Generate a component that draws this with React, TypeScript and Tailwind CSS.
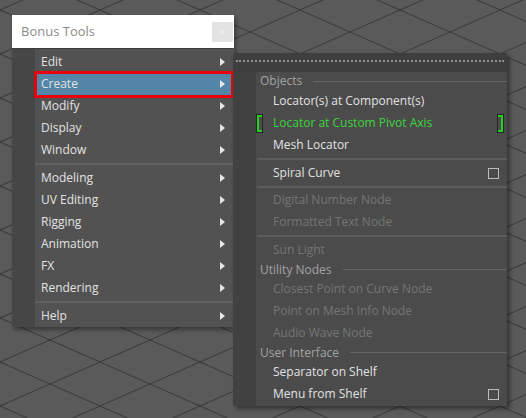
import React from "react";

const FONT = "font-['Open_Sans','Noto_Sans',sans-serif]";

function Grid() {
  const lines: React.ReactNode[] = [];
  const slope = 0.44;
  const step = 44;
  for (let i = -20; i < 30; i++) {
    const c = i * step + 10;
    lines.push(
      <line key={"a" + i} x1={0} y1={c} x2={526} y2={c + 526 * slope} stroke="#3a3a3a" strokeWidth={1} />
    );
    lines.push(
      <line key={"b" + i} x1={0} y1={c} x2={526} y2={c - 526 * slope} stroke="#3a3a3a" strokeWidth={1} />
    );
  }
  return (
    <svg className="absolute inset-0" width={526} height={418} viewBox="0 0 526 418">
      <rect width={526} height={418} fill="#5a5a5a" />
      {lines}
    </svg>
  );
}

function Arrow() {
  return (
    <svg width={5} height={8} viewBox="0 0 5 8" className="mr-[8px]">
      <path d="M0 0 L5 4 L0 8 Z" fill="#e6e6e6" />
    </svg>
  );
}

function Checkbox() {
  return <div className="w-[11px] h-[11px] border border-[#bcbcbc] mr-[8px]" />;
}

type MainItem = { label: string } | { sep: true };

const mainItems: MainItem[] = [
  { label: "Edit" },
  { label: "Create" },
  { label: "Modify" },
  { label: "Display" },
  { label: "Window" },
  { sep: true },
  { label: "Modeling" },
  { label: "UV Editing" },
  { label: "Rigging" },
  { label: "Animation" },
  { label: "FX" },
  { label: "Rendering" },
  { sep: true },
  { label: "Help" },
];

type SubItem =
  | { kind: "header"; label: string; h: number }
  | { kind: "item"; label: string; disabled?: boolean; check?: boolean; green?: boolean }
  | { kind: "sep"; h: number };

const subItems: SubItem[] = [
  { kind: "header", label: "Objects", h: 18 },
  { kind: "item", label: "Locator(s) at Component(s)" },
  { kind: "item", label: "Locator at Custom Pivot Axis", green: true },
  { kind: "item", label: "Mesh Locator" },
  { kind: "sep", h: 6 },
  { kind: "item", label: "Spiral Curve", check: true },
  { kind: "sep", h: 5 },
  { kind: "item", label: "Digital Number Node", disabled: true },
  { kind: "item", label: "Formatted Text Node", disabled: true },
  { kind: "sep", h: 6 },
  { kind: "item", label: "Sun Light", disabled: true },
  { kind: "header", label: "Utility Nodes", h: 17 },
  { kind: "item", label: "Closest Point on Curve Node", disabled: true },
  { kind: "item", label: "Point on Mesh Info Node", disabled: true },
  { kind: "item", label: "Audio Wave Node", disabled: true },
  { kind: "header", label: "User Interface", h: 17 },
  { kind: "item", label: "Separator on Shelf" },
  { kind: "item", label: "Menu from Shelf", check: true },
];

function MainMenu() {
  return (
    <div className="absolute left-[12px] top-[15px] w-[222px] shadow-[2px_3px_4px_rgba(0,0,0,0.35)]">
      <div className="h-[33px] bg-white flex items-center justify-between pl-[9px] pr-[1px]">
        <span className="text-[13px] text-[#8c8c8c]">Bonus Tools</span>
        <div className="w-[21px] h-[20px] bg-[#e3e3e3] flex items-center justify-center text-[11px] text-[#f2f2f2] leading-none">
          ×
        </div>
      </div>
      <div className="w-[221px] flex bg-[#525252] border-t border-[#3c3c3c]">
        <div className="w-[23px] bg-[#464646] shrink-0" />
        <div className="flex-1 pt-[2px]">
          {mainItems.map((it, i) =>
            "sep" in it ? (
              <div key={i} className="h-[6px] flex items-center">
                <div className="w-full h-[2px] bg-[#606060]" />
              </div>
            ) : (
              <div
                key={i}
                className={
                  "relative h-[22px] flex items-center justify-between pl-[6px] text-[12px] text-[#e2e2e2] " +
                  (it.label === "Create" ? "bg-[#5285a6]" : "")
                }
              >
                <span>{it.label}</span>
                <Arrow />
                {it.label === "Create" && (
                  <div className="absolute left-[-1px] right-[-1px] top-[-2px] bottom-[-3px] border-[3px] border-[#e8000b]" />
                )}
              </div>
            )
          )}
        </div>
      </div>
    </div>
  );
}

function SubMenu() {
  return (
    <div className="absolute left-[233px] top-[53px] w-[274px] shadow-[3px_3px_4px_rgba(0,0,0,0.4)]">
      <div className="h-[19px] bg-[#3e3e3e] flex flex-col">
        <div className="h-[7px]" />
        <div className="mx-[3px] h-[2px] border-t-2 border-dotted border-[#8e8e8e]" />
      </div>
      <div className="flex bg-[#4b4b4b]">
        <div className="w-[23px] bg-[#414141] shrink-0" />
        <div className="flex-1 pb-[1px]">
          {subItems.map((it, i) => {
            if (it.kind === "header")
              return (
                <div key={i} className="flex items-center text-[12px] text-[#a3a3a3] pl-[4px]" style={{ height: it.h }}>
                  <span className="whitespace-nowrap">{it.label}</span>
                  <div className="flex-1 h-px bg-[#646464] ml-[11px]" />
                </div>
              );
            if (it.kind === "sep")
              return (
                <div key={i} className="flex items-center pl-[1px]" style={{ height: it.h }}>
                  <div className="w-full h-[2px] bg-[#5c5c5c]" />
                </div>
              );
            return (
              <div
                key={i}
                className={
                  "relative h-[22px] flex items-center justify-between pl-[17px] text-[12px] " +
                  (it.green ? "text-[#3cd43c]" : it.disabled ? "text-[#757575]" : "text-[#e2e2e2]")
                }
              >
                <span className="whitespace-nowrap">{it.label}</span>
                {it.check && <Checkbox />}
                {it.green && (
                  <>
                    <div className="absolute left-[1px] top-[3px] w-[5px] h-[17px] border-l-[2px] border-t-[2px] border-b-[2px] border-[#1fd21f] shadow-[0_0_0_1px_rgba(0,0,0,0.5)]" />
                    <div className="absolute right-[4px] top-[3px] w-[5px] h-[17px] border-r-[2px] border-t-[2px] border-b-[2px] border-[#1fd21f] shadow-[0_0_0_1px_rgba(0,0,0,0.5)]" />
                  </>
                )}
              </div>
            );
          })}
        </div>
      </div>
    </div>
  );
}

export default function App() {
  return (
    <div className={"relative w-[526px] h-[418px] overflow-hidden " + FONT}>
      <Grid />
      <MainMenu />
      <SubMenu />
    </div>
  );
}
